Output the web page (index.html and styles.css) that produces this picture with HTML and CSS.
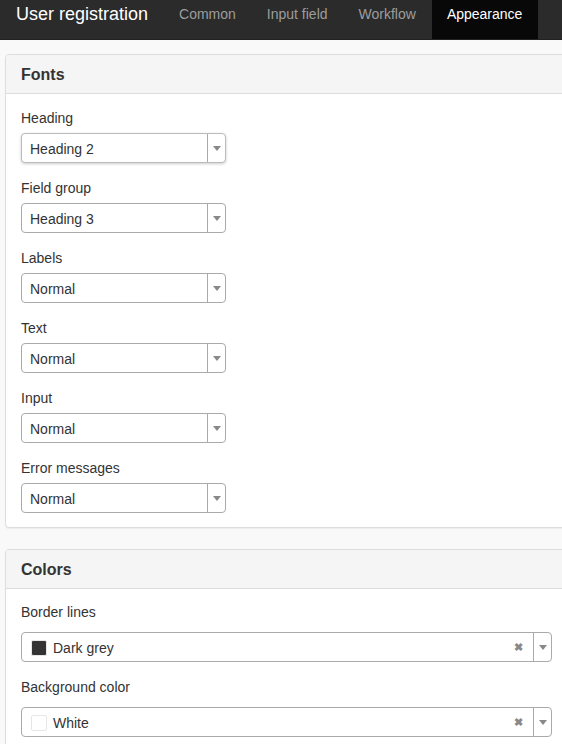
FILE: index.html
```html
<!DOCTYPE html>
<html lang="en">
<head>
    <meta charset="UTF-8">
    <title>User registration</title>
    <link rel="stylesheet" href="styles.css">
</head>
<body>
    <nav class="topbar">
        <span class="brand">User registration</span>
        <a class="tab">Common</a>
        <a class="tab">Input field</a>
        <a class="tab">Workflow</a>
        <a class="tab active">Appearance</a>
    </nav>

    <div class="content">
        <div class="panel">
            <div class="panel-heading">Fonts</div>
            <div class="panel-body">
                <div class="field">
                    <label>Heading</label>
                    <div class="select raised"><span class="value">Heading 2</span><span class="arrow"></span></div>
                </div>
                <div class="field">
                    <label>Field group</label>
                    <div class="select"><span class="value">Heading 3</span><span class="arrow"></span></div>
                </div>
                <div class="field">
                    <label>Labels</label>
                    <div class="select"><span class="value">Normal</span><span class="arrow"></span></div>
                </div>
                <div class="field">
                    <label>Text</label>
                    <div class="select"><span class="value">Normal</span><span class="arrow"></span></div>
                </div>
                <div class="field">
                    <label>Input</label>
                    <div class="select"><span class="value">Normal</span><span class="arrow"></span></div>
                </div>
                <div class="field">
                    <label>Error messages</label>
                    <div class="select"><span class="value">Normal</span><span class="arrow"></span></div>
                </div>
            </div>
        </div>

        <div class="panel">
            <div class="panel-heading">Colors</div>
            <div class="panel-body colors">
                <div class="field">
                    <label>Border lines</label>
                    <div class="select wide">
                        <span class="value"><i class="swatch" style="background:#333"></i>Dark grey</span>
                        <span class="clear">&#10006;</span>
                        <span class="arrow"></span>
                    </div>
                </div>
                <div class="field">
                    <label>Background color</label>
                    <div class="select wide">
                        <span class="value"><i class="swatch" style="background:#fff"></i>White</span>
                        <span class="clear">&#10006;</span>
                        <span class="arrow"></span>
                    </div>
                </div>
            </div>
        </div>
    </div>
</body>
</html>
```

FILE: styles.css
```css
body {
    margin: 0;
    font-family: 'Liberation Sans', Arial, sans-serif;
    font-size: 14px;
    color: #333;
    background-color: #f9f9f9;
    overflow: hidden;
}
.topbar {
    display: flex;
    height: 39px;
    background-color: #2b2b2b;
    border-bottom: 1px solid #222;
}
.brand {
    padding: 3px 16px 0 16px;
    font-size: 18px;
    line-height: 22px;
    color: #fff;
}
.tab {
    padding: 4px 16px 0 15px;
    line-height: 20px;
    color: #9d9d9d;
}
.tab.active {
    background-color: #080808;
    color: #fff;
}
.content {
    padding: 14px 0 0 5px;
    width: 562px;
}
.panel {
    background-color: #fff;
    border: 1px solid #ddd;
    border-radius: 4px;
    margin-bottom: 21px;
    box-shadow: 0 1px 1px rgba(0,0,0,.05);
}
.panel-heading {
    height: 38px;
    line-height: 40px;
    padding: 0 15px;
    background-color: #f5f5f5;
    border-bottom: 1px solid #ddd;
    border-radius: 3px 3px 0 0;
    font-size: 16px;
    font-weight: bold;
}
.panel-body {
    padding: 14px 15px 14px;
}
.panel-body.colors {
    padding-top: 13px;
}
.field {
    margin-bottom: 15px;
}
.field:last-child {
    margin-bottom: 0;
}
label {
    display: block;
    line-height: 20px;
    margin-bottom: 5px;
}
.colors label {
    margin-bottom: 10px;
}
.select {
    display: flex;
    align-items: center;
    box-sizing: border-box;
    width: 205px;
    height: 30px;
    border: 1px solid #aaa;
    border-radius: 4px;
    background-color: #fff;
}
.select.raised {
    border-color: #bbb;
    box-shadow: 0 1px 3px rgba(0,0,0,.2);
}
.select.wide {
    width: 531px;
}
.value {
    flex: 1;
    display: flex;
    align-items: center;
    padding: 1px 0 0 8px;
    color: #333;
}
.swatch {
    display: inline-block;
    width: 14px;
    height: 14px;
    margin: 0 6px 0 1px;
    border: 1px solid #e6e6e6;
    border-radius: 2px;
}
.clear {
    width: 13px;
    margin-right: 6px;
    font-size: 11px;
    font-weight: bold;
    color: #888;
}
.arrow {
    position: relative;
    width: 17px;
    height: 100%;
    border-left: 1px solid #aaa;
}
.arrow::after {
    content: "";
    position: absolute;
    left: 5px;
    top: 12px;
    border-left: 4px solid transparent;
    border-right: 4px solid transparent;
    border-top: 5px solid #888;
}
```
